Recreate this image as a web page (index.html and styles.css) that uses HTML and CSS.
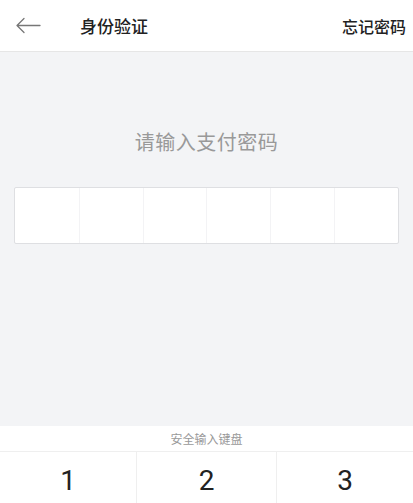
FILE: index.html
```html
<!DOCTYPE html>
<html lang="zh-CN">
<head>
<meta charset="utf-8">
<title>身份验证</title>
<link rel="stylesheet" href="styles.css">
</head>
<body>
<div class="screen">
  <header class="topbar">
    <div class="left">
      <svg class="back" width="25" height="17" viewBox="0 0 25 17" aria-hidden="true">
        <path d="M1 8.5 H24 M1 8.5 L8 1.5 M1 8.5 L8 15.5" fill="none" stroke="#777" stroke-width="1.3" stroke-linecap="round" stroke-linejoin="round"/>
      </svg>
      <span class="title">身份验证</span>
    </div>
    <span class="forgot">忘记密码</span>
  </header>
  <main class="content">
    <p class="prompt">请输入支付密码</p>
    <div class="pinbox">
      <div class="cell"></div>
      <div class="cell"></div>
      <div class="cell"></div>
      <div class="cell"></div>
      <div class="cell"></div>
      <div class="cell"></div>
    </div>
  </main>
  <section class="keyboard">
    <div class="kb-title">安全输入键盘</div>
    <div class="keys">
      <div class="key">1</div>
      <div class="key">2</div>
      <div class="key">3</div>
    </div>
  </section>
</div>
</body>
</html>
```
FILE: styles.css
```css
* { box-sizing: border-box; }
html, body { margin: 0; padding: 0; }
body {
  font-family: "Noto Sans CJK SC", "Noto Sans", sans-serif;
  background: #f3f4f6;
  color: #222;
}
.screen {
  width: 413px;
  height: 503px;
  overflow: hidden;
  display: flex;
  flex-direction: column;
}
.topbar {
  flex: none;
  height: 52px;
  background: #fff;
  border-bottom: 1px solid #e6e6e6;
  display: flex;
  align-items: center;
  justify-content: space-between;
  padding: 0 7px 0 16px;
}
.left {
  display: flex;
  align-items: center;
}
.back { display: block; }
.title {
  margin-left: 39px;
  font-size: 17px;
  font-weight: 500;
  color: #222;
}
.forgot {
  font-size: 16px;
  font-weight: 500;
  color: #222;
}
.content {
  flex: none;
  height: 374px;
  display: flex;
  flex-direction: column;
  align-items: center;
  background: #f3f4f6;
}
.prompt {
  margin: 70px 0 0;
  font-size: 20px;
  line-height: 40px;
  color: #999;
  letter-spacing: 0.5px;
}
.pinbox {
  margin-top: 25px;
  width: 385px;
  height: 57px;
  background: #fff;
  border: 1px solid #dedfe2;
  border-radius: 2px;
  display: grid;
  grid-template-columns: repeat(6, 1fr);
}
.cell { border-left: 1px solid #f3f3f5; }
.cell:first-child { border-left: none; }
.keyboard {
  flex: none;
  background: #fff;
}
.kb-title {
  height: 26px;
  line-height: 26px;
  text-align: center;
  font-size: 12px;
  color: #999;
  border-bottom: 1px solid #efefef;
}
.keys {
  display: grid;
  grid-template-columns: 136px 140px 1fr;
}
.key {
  height: 56px;
  display: flex;
  align-items: center;
  justify-content: center;
  font-family: Roboto, "Noto Sans", sans-serif;
  font-size: 28px;
  color: #222;
  border-left: 1px solid #efefef;
}
.key:first-child { border-left: none; }
```
